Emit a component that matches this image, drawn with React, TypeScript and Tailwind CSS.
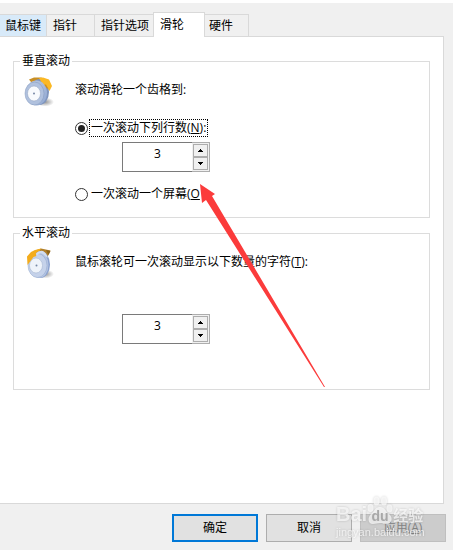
import React, { useState } from 'react';
import clsx from 'clsx';

const TABS = [
  { id: 'buttons', label: '鼠标键', className: 'w-[47px] border-l-0 pl-[5px] bg-[#d8eaf9]' },
  { id: 'pointers', label: '指针', className: 'w-12 border-l-0 pl-1.5 bg-[#f0f0f0]' },
  { id: 'options', label: '指针选项', className: 'w-[58px] border-l-0 border-r-0 pl-1.5 bg-[#f0f0f0]' },
  { id: 'wheel', label: '滑轮', className: 'w-[52px] pl-1.5 bg-white' },
  { id: 'hardware', label: '硬件', className: 'w-11 border-l-0 pl-1 bg-[#f0f0f0]' },
];

interface WheelIconProps {
  id: string;
  horizontal?: boolean;
}

const WheelIcon: React.FC<WheelIconProps> = ({ id, horizontal }) => (
  <svg className="size-8 shrink-0" viewBox="0 0 32 32" aria-hidden="true">
    <defs>
      <linearGradient id={`${id}-rim`} x1="0" y1="0" x2="1" y2="1">
        <stop offset="0" stopColor="#b9c6dc" />
        <stop offset="0.5" stopColor="#a9bbda" />
        <stop offset="1" stopColor="#8ea6d2" />
      </linearGradient>
      <radialGradient id={`${id}-shadow`}>
        <stop offset="0" stopColor="#666666" stopOpacity="0.7" />
        <stop offset="1" stopColor="#666666" stopOpacity="0" />
      </radialGradient>
    </defs>
    <ellipse cx="23" cy="27" rx="9" ry="4.500" fill={`url(#${id}-shadow)`} />
    {horizontal ? (
      <>
        <path d="M12 4 L19 1.500 L28.500 3.500 L26 9 L14 8 Z" fill="#b07f2b" />
        <ellipse cx="18.500" cy="17.500" rx="9.500" ry="13.500" fill="#8ba2cf" />
        <ellipse cx="17" cy="18" rx="9.500" ry="13" fill="#b4c4e3" />
        <ellipse cx="15.500" cy="18.500" rx="9.500" ry="12" fill="#c5d2ea" stroke="#93a8cd" strokeWidth="0.500" />
        <ellipse cx="14" cy="18.500" rx="6.500" ry="7.500" fill="#eef3fa" stroke="#9caecb" strokeWidth="0.500" />
        <path d="M13 3 L19 1.500 L18 3.500 L14 6 L14.500 9 L11.500 10 L5.500 18 L5 9.500 L9 5 Z" fill="#f3ac1c" />
        <path d="M14 6.500 Q17 3 21 4 Q25 6 25.500 11 L21 7 Q17 5 14.500 9 Z" fill="#d3ddef" />
        <path d="M24 3 L28.500 4 L26.500 8 Z" fill="#8d651c" />
      </>
    ) : (
      <>
        <path d="M7 4.500 L12 2.500 L20 2.500 L17 6 L9 7 Z" fill="#c98f24" />
        <ellipse cx="17.500" cy="17" rx="9.500" ry="13" fill="#7f95bd" />
        <path d="M17 3 L21 2.500 L27 4.500 L30 11 L27.500 16 L25 12 L21 10 Z" fill="#fbb823" />
        <path d="M20 10 L24 9.500 L27 15 L25 13 Z" fill="#cf8d1a" />
        <ellipse cx="14.500" cy="18" rx="10.500" ry="12.500" fill={`url(#${id}-rim)`} />
        <ellipse cx="12.500" cy="18.500" rx="9.500" ry="11.500" fill="#b0c1de" stroke="#8298bd" strokeWidth="0.500" />
        <ellipse cx="12" cy="18.500" rx="6.500" ry="7.500" fill="#f8fafd" stroke="#8fa1bf" strokeWidth="0.500" />
      </>
    )}
    <circle cx={horizontal ? 14.5 : 12} cy="18.500" r="1" fill="#7788a5" />
  </svg>
);

interface SpinnerProps {
  id: string;
  label: string;
  value: number;
  onChange: (value: number) => void;
}

const Spinner: React.FC<SpinnerProps> = ({ id, label, value, onChange }) => (
  <div className="ml-[47px] flex h-[30px] w-[88px]">
    <input
      id={id}
      type="text"
      aria-label={label}
      value={value}
      onChange={e => onChange(Number(e.target.value) || 0)}
      className="min-w-0 flex-1 border border-r-0 border-[#7a7a7a] bg-white pb-1.5 text-center outline-none"
    />
    <div className="flex w-[18px] flex-col border border-l-0 border-[#adadad] bg-[#f0f0f0] p-px">
      <button
        type="button"
        aria-label="增加"
        onClick={() => onChange(value + 1)}
        className="flex flex-1 items-center justify-center border border-[#adadad]"
      >
        <svg className="h-[3px] w-[5px]" viewBox="0 0 5 3"><path d="M2 0h1v1h1v1h1v1H0V2h1V1h1z" /></svg>
      </button>
      <button
        type="button"
        aria-label="减少"
        onClick={() => onChange(Math.max(1, value - 1))}
        className="flex flex-1 items-center justify-center border border-[#adadad]"
      >
        <svg className="h-[3px] w-[5px]" viewBox="0 0 5 3"><path d="M0 0h5v1H4v1H3v1H2V2H1V1H0z" /></svg>
      </button>
    </div>
  </div>
);

const RADIO =
  'size-[13px] shrink-0 appearance-none rounded-full border border-[#333333] bg-white p-[2px] checked:bg-[#222222] checked:bg-clip-content';

const Watermark = () => (
  <div
    className="pointer-events-none absolute -top-2 right-[30px] w-[87px] text-white/70 drop-shadow-[0_0_1px_rgba(0,0,0,0.25)]"
    aria-hidden="true"
  >
    <div className="flex h-7 items-end">
      <span className="font-['Liberation_Sans'] text-[20px] leading-5 font-bold">Bai</span>
      <span className="relative flex h-7 w-[26px] shrink-0 items-end justify-center">
        <svg className="absolute inset-0 h-7 w-[26px]" viewBox="0 0 26 28" fill="currentColor">
          <ellipse cx="3.500" cy="12" rx="3" ry="4" />
          <ellipse cx="9.500" cy="5" rx="3" ry="4.500" />
          <ellipse cx="17" cy="5" rx="3" ry="4.500" />
          <ellipse cx="22.500" cy="12.500" rx="3" ry="4" />
          <path d="M13 11 C18 11 18 15 22 18 C27 22 24 28 20 28 C16 28 16 27 13 27 C10 27 9 28 6 28 C1 28 0 22 4 18 C8 15 8 11 13 11 Z" />
        </svg>
        <span className="relative font-['Liberation_Sans'] text-[14px] leading-4 font-bold text-[#a8a8a8]">du</span>
      </span>
      <span className="text-[15px] leading-[18px] font-bold whitespace-nowrap">经验</span>
    </div>
    <div className="mt-0.5 whitespace-nowrap font-['Liberation_Sans'] text-[11px] leading-3">jingyan.baidu.com</div>
  </div>
);

const App = () => {
  const [active, setActive] = useState('wheel');
  const [mode, setMode] = useState<'lines' | 'screen'>('lines');
  const [lines, setLines] = useState(3);
  const [chars, setChars] = useState(3);

  return (
    <div className="relative flex min-h-screen flex-col border-t-[3px] border-white bg-[#f0f0f0] font-['Open_Sans','Noto_Sans_CJK_SC',sans-serif] text-[12px] leading-4 text-black">
      <div role="tablist" className="relative flex items-end pt-[9px]">
        {TABS.map(tab => (
          <button
            key={tab.id}
            type="button"
            role="tab"
            aria-selected={active === tab.id}
            onClick={() => setActive(tab.id)}
            className={clsx(
              'whitespace-nowrap border border-b-0 border-[#d9d9d9] text-left',
              tab.id === 'wheel' ? '-mb-px h-[25px]' : 'h-[22px]',
              tab.className
            )}
          >
            {tab.label}
          </button>
        ))}
      </div>

      <main className="mr-[9px] flex-1 border border-l-0 border-[#d9d9d9] bg-white px-[13px] pt-4">
        <fieldset className="border border-[#dcdcdc] pb-[15px]">
          <legend className="ml-1.5 px-0.5">垂直滚动</legend>
          <div className="flex gap-[21px] pl-2">
            <div className="pt-1.5"><WheelIcon id="vertical" /></div>
            <div className="pt-[13px]">
              <p>滚动滑轮一个齿格到:</p>
              <div className="mt-[22px] mb-1.5 flex h-4 items-center gap-0.5">
                <input
                  id="mode-lines"
                  type="radio"
                  name="mode"
                  className={RADIO}
                  checked={mode === 'lines'}
                  onChange={() => setMode('lines')}
                />
                <label htmlFor="mode-lines" className="px-px outline outline-dotted outline-black">
                  一次滚动下列行数(<u>N</u>):
                </label>
              </div>
              <Spinner id="lines" label="行数" value={lines} onChange={setLines} />
              <div className="mt-3.5 flex h-4 items-center gap-0.5">
                <input
                  id="mode-screen"
                  type="radio"
                  name="mode"
                  className={RADIO}
                  checked={mode === 'screen'}
                  onChange={() => setMode('screen')}
                />
                <label htmlFor="mode-screen" className="px-px">一次滚动一个屏幕(<u>O</u></label>
              </div>
            </div>
          </div>
        </fieldset>

        <fieldset className="mt-[7px] border border-[#dcdcdc] pb-[45px]">
          <legend className="ml-1.5 px-0.5">水平滚动</legend>
          <div className="flex gap-[21px] pl-2">
            <div className="pt-1.5"><WheelIcon id="horizontal" horizontal /></div>
            <div className="pt-[13px]">
              <label htmlFor="chars" className="mb-11 block">
                鼠标滚轮可一次滚动显示以下数量的字符(<u>T</u>):
              </label>
              <Spinner id="chars" label="字符数" value={chars} onChange={setChars} />
            </div>
          </div>
        </fieldset>
      </main>

      <footer className="relative flex justify-end gap-2 pt-2.5 pr-[7px] pb-2">
        <button type="button" className="h-7 w-[86px] border-2 border-[#0078d7] bg-[#e1e1e1]">确定</button>
        <button type="button" className="h-7 w-[86px] border border-[#adadad] bg-[#e1e1e1]">取消</button>
        <button type="button" disabled className="h-7 w-[86px] border border-[#bfbfbf] bg-[#cccccc] text-[#838383]">
          应用(<u>A</u>)
        </button>
        <Watermark />
      </footer>

      {/* pointer arrow drawn over both groups */}
      <svg
        className="pointer-events-none absolute top-[181px] left-[200px] h-[203px] w-[125px]"
        viewBox="0 0 125 203"
        aria-hidden="true"
      >
        <path d="M0 0 L15 10 L12 12 L125 203 L124 203 L6 16 L2 19 Z" fill="#fb3b3b" />
      </svg>
    </div>
  );
};

export default App;
